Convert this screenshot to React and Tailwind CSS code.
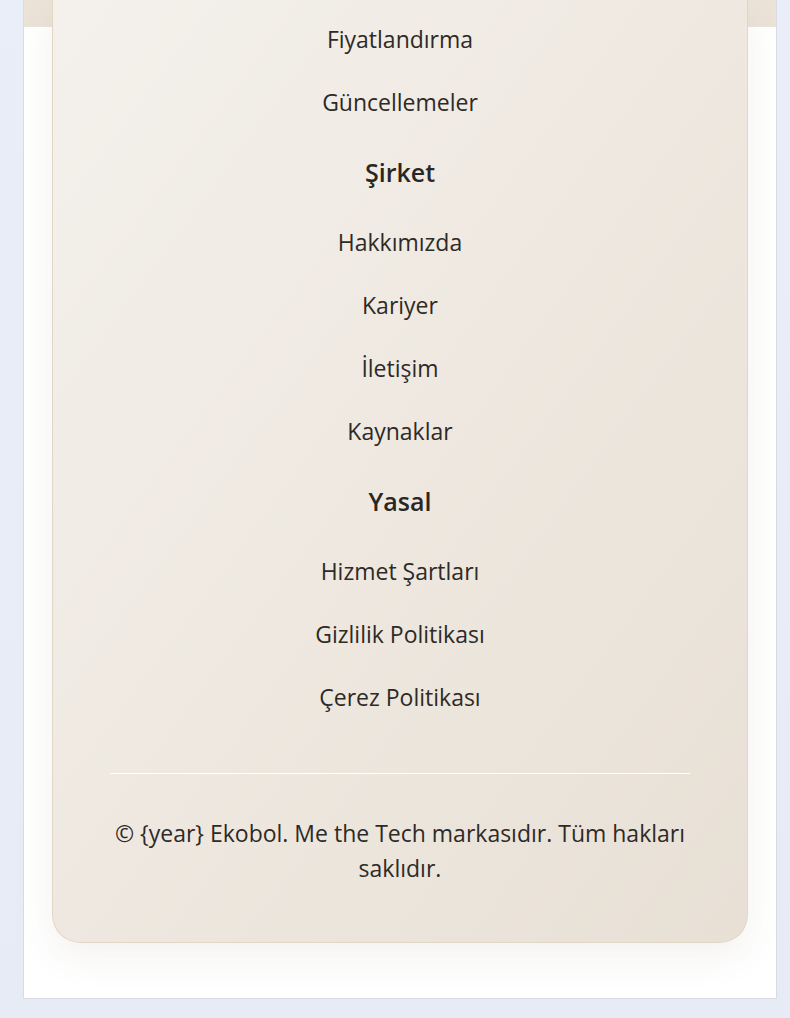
const groups = [
  { links: ["Fiyatlandırma", "Güncellemeler"] },
  { title: "Şirket", links: ["Hakkımızda", "Kariyer", "İletişim", "Kaynaklar"] },
  { title: "Yasal", links: ["Hizmet Şartları", "Gizlilik Politikası", "Çerez Politikası"] },
];

export default function App() {
  return (
    <div className="min-h-screen bg-gradient-to-b from-[#e9eef8] to-[#e6ebf5] font-['Open_Sans',sans-serif] text-[#2e2a27]">
      <div className="ml-[23px] mr-[13px] bg-white border-l border-b border-r border-[#d9dce2] relative h-[999px]">
        {/* band behind the card */}
        <div className="absolute top-0 left-0 right-0 h-[27px] bg-[#ebe3d8]" />

        <footer className="relative mx-[28px] rounded-b-[28px] border border-t-0 border-[#e2d6c6] bg-gradient-to-br from-[#f4f1ec] via-[#eee8e0] to-[#e8e0d5] px-[57px] pt-[8px] pb-[56px] shadow-[0_14px_36px_rgba(120,90,60,0.08)]">
          <nav className="flex flex-col items-center text-center">
            {groups.map((g, i) => (
              <div key={i} className="flex flex-col items-center">
                {g.title && (
                  <h3 className="mt-[19px] mb-[20px] text-[25px] font-semibold leading-[38px] text-[#2a2624]">{g.title}</h3>
                )}
                {g.links.map((l) => (
                  <a key={l} href="#" className="py-[14px] text-[23px] leading-[35px]">
                    {l}
                  </a>
                ))}
              </div>
            ))}
          </nav>

          <div className="mt-[44px] border-t border-white" />

          <p className="mt-[42px] text-center text-[23px] leading-[35px]">
            © {"{year}"} Ekobol. Me the Tech markasıdır. Tüm hakları saklıdır.
          </p>
        </footer>
      </div>
    </div>
  );
}
